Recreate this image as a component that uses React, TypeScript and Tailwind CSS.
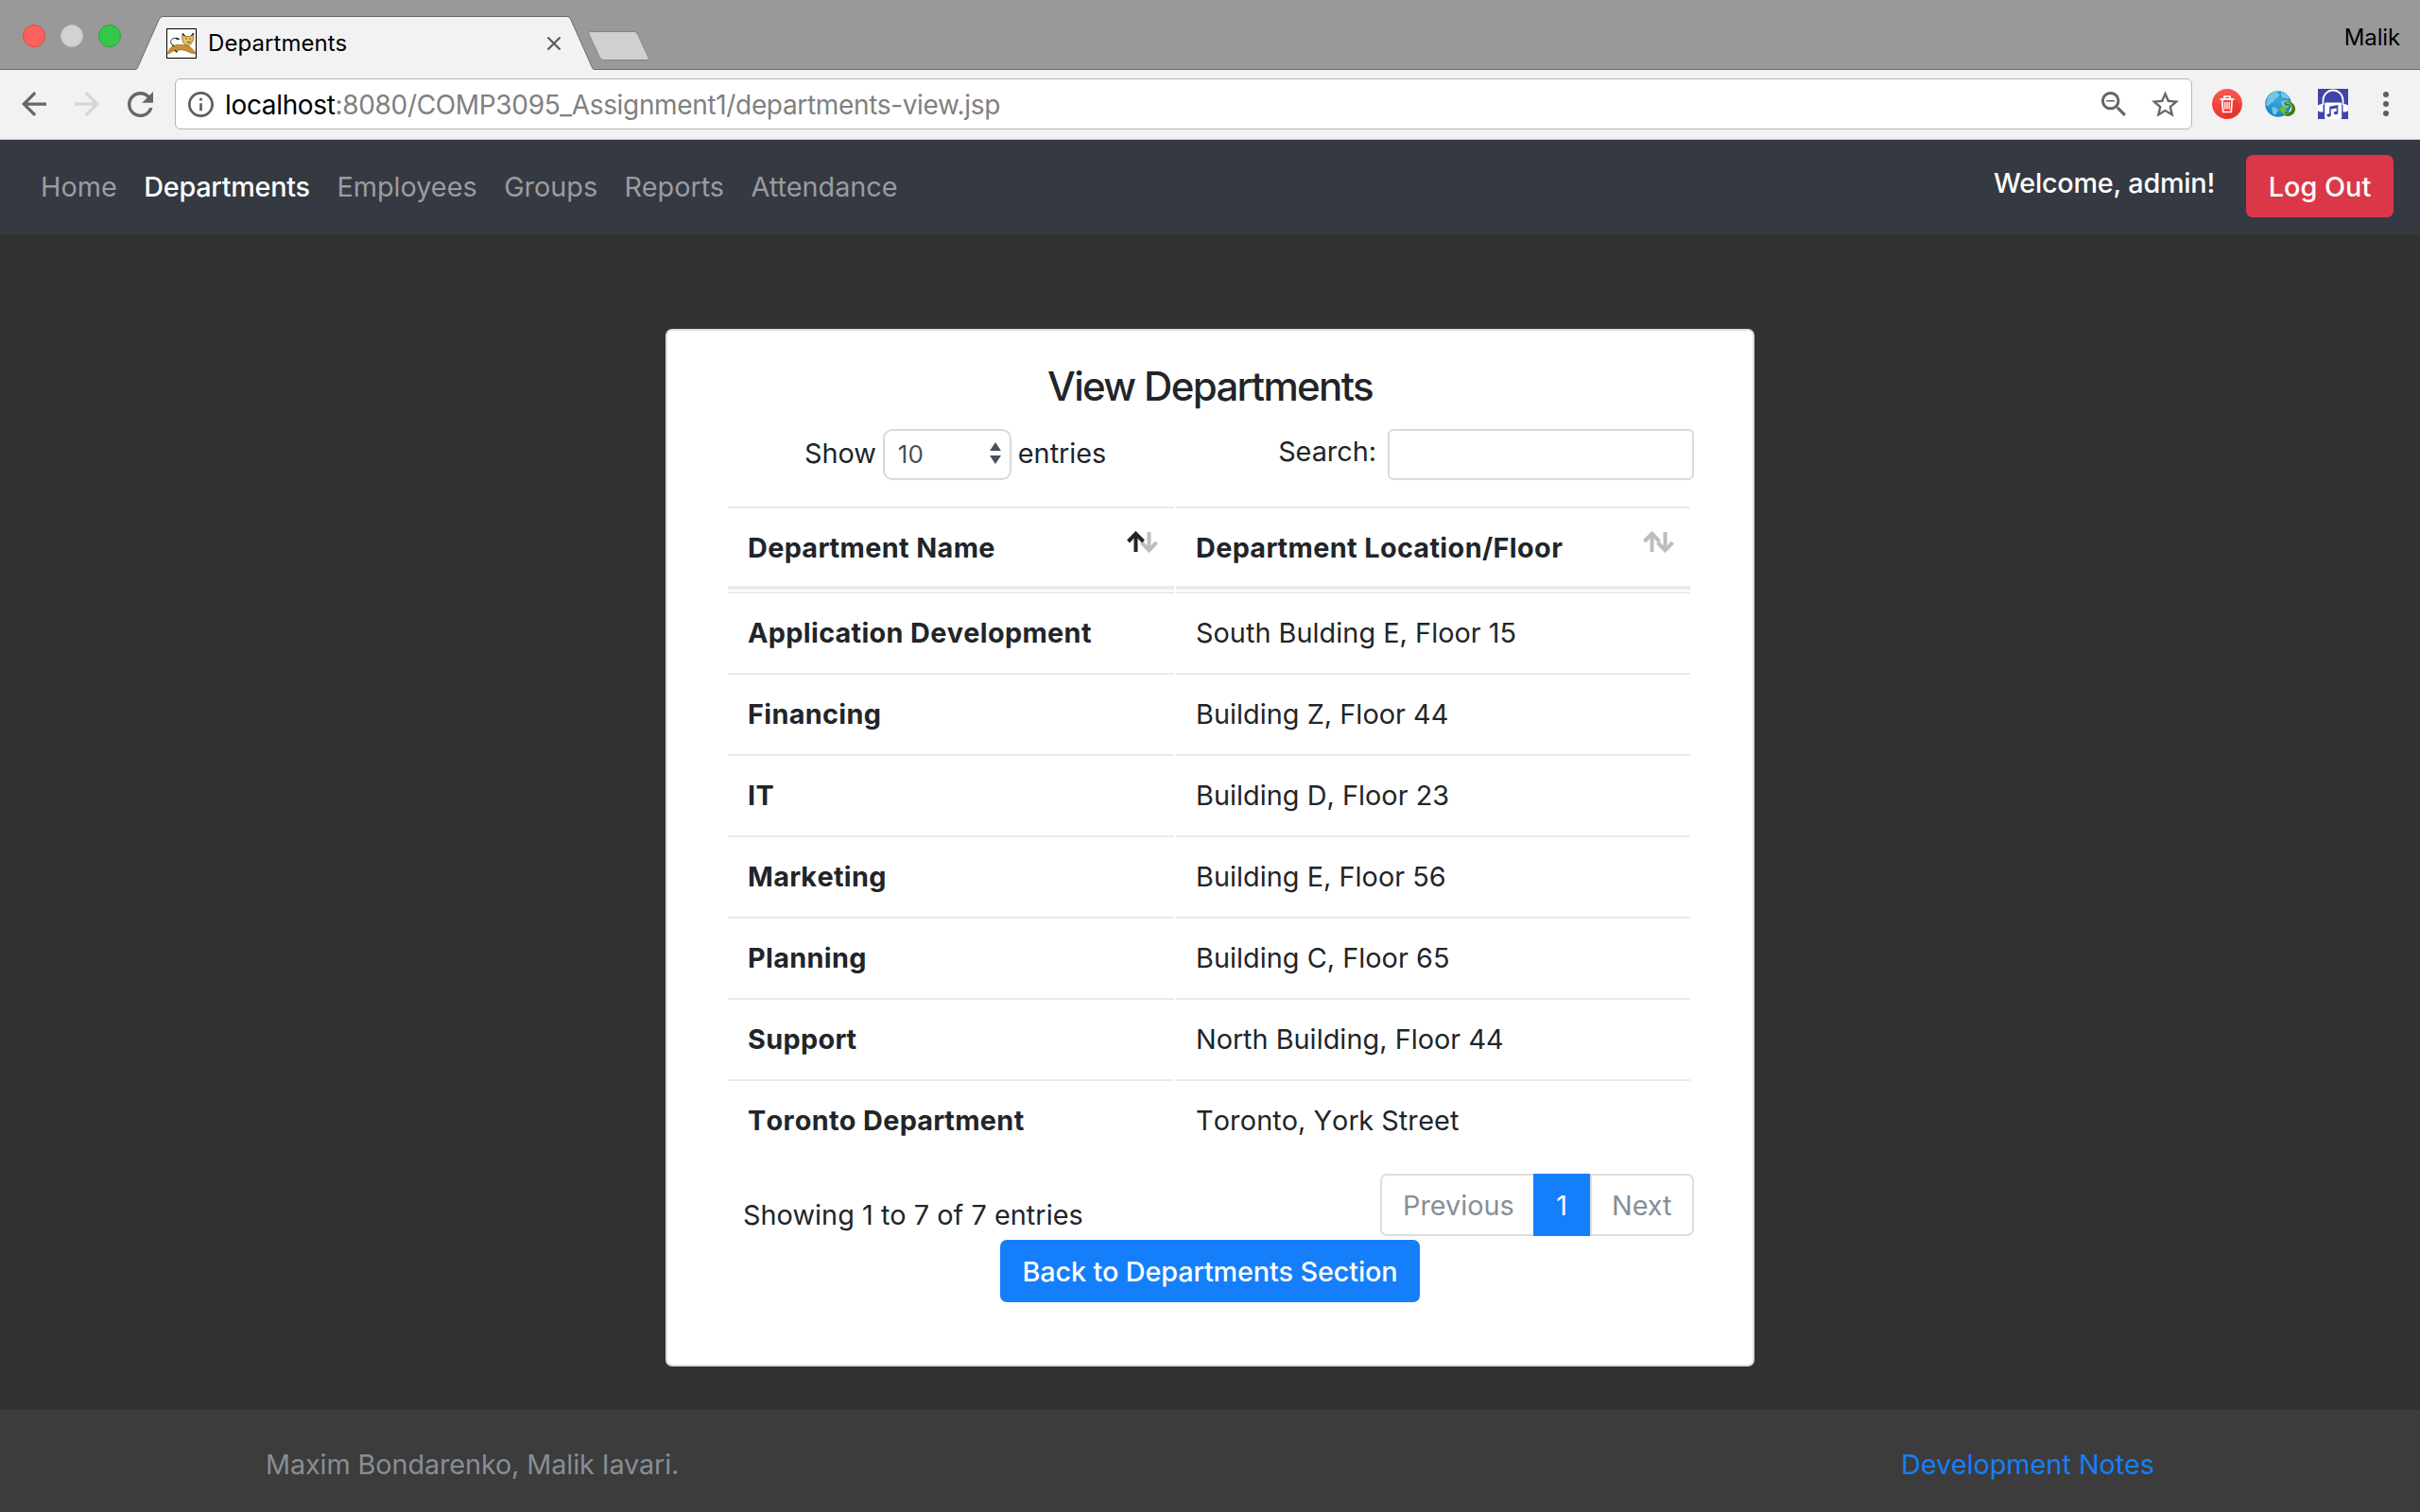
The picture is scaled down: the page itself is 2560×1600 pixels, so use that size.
import type { ReactNode } from "react";

const navItems = ["Home", "Departments", "Employees", "Groups", "Reports", "Attendance"];

const departments = [
  ["Application Development", "South Bulding E, Floor 15"],
  ["Financing", "Building Z, Floor 44"],
  ["IT", "Building D, Floor 23"],
  ["Marketing", "Building E, Floor 56"],
  ["Planning", "Building C, Floor 65"],
  ["Support", "North Building, Floor 44"],
  ["Toronto Department", "Toronto, York Street"],
];

function Icon({ d, box, className }: { d: string; box: string; className: string }) {
  return (
    <svg viewBox={box} className={`block shrink-0 fill-current ${className}`}>
      <path d={d} />
    </svg>
  );
}

const ARROW = "M20 11H7.83l5.59-5.59L12 4l-8 8 8 8 1.41-1.41L7.83 13H20v-2z";
const RELOAD =
  "M17.65 6.35C16.2 4.9 14.21 4 12 4c-4.42 0-7.99 3.58-7.99 8s3.57 8 7.99 8c3.73 0 6.84-2.55 7.73-6h-2.08c-.82 2.33-3.04 4-5.65 4-3.31 0-6-2.69-6-6s2.69-6 6-6c1.66 0 3.14.69 4.22 1.78L13 11h7V4l-2.35 2.35z";
const INFO =
  "M11 7h2v2h-2zm0 4h2v6h-2zm1-9C6.48 2 2 6.48 2 12s4.48 10 10 10 10-4.48 10-10S17.52 2 12 2zm0 18c-4.41 0-8-3.59-8-8s3.59-8 8-8 8 3.59 8 8-3.59 8-8 8z";
const ZOOM_OUT =
  "M15.5 14h-.79l-.28-.27C15.41 12.59 16 11.11 16 9.5 16 5.91 13.09 3 9.5 3S3 5.91 3 9.5 5.91 16 9.5 16c1.61 0 3.09-.59 4.23-1.57l.27.28v.79l5 4.99L20.49 19l-4.99-5zm-6 0C7.01 14 5 11.99 5 9.5S7.01 5 9.5 5 14 7.01 14 9.5 11.99 14 9.5 14zM6.5 9h6v1h-6z";
const STAR =
  "M22 9.24l-7.19-.62L12 2 9.19 8.63 2 9.24l5.46 4.73L5.82 21 12 17.27 18.18 21l-1.63-7.03L22 9.24zM12 15.4l-3.76 2.27 1-4.28-3.32-2.88 4.38-.38L12 6.1l1.71 4.04 4.38.38-3.32 2.88 1 4.28L12 15.4z";

function TomcatIcon() {
  return (
    <svg viewBox="0 0 32 32" className="block size-8 shrink-0">
      <rect x="0.5" y="0.5" width="31" height="31" fill="#fff" stroke="#000" />
      <path d="M1.500 26.500C3 21 6 18.500 11 17.500c4-.5 6 .5 9 0l5 2 6 6-1 1.500-4-1-6-2.500-4-.8-6 .8-4 1-2.500 2z" fill="#c8912b" stroke="#7a5a1c" strokeWidth="0.6" />
      <path d="M17 6l3 2.500h5L29 5.500l-.5 7-3 4.500-3.500 1.500-4-3-1.500-5z" fill="#ecc15a" stroke="#6b5426" strokeWidth="0.7" />
      <path d="M17 5.500l2.500 2.500M28.500 5l-2 3" stroke="#111" strokeWidth="1.300" />
      <path d="M20.500 10.500l1.500.8M26 10.500l-1.500.8M22 14l1.500 1 2-1" stroke="#3a2d10" strokeWidth="0.9" fill="none" />
      <path d="M7 18C3.500 16 4 11 8 10.500c3-.2 4 .8 6 1" stroke="#222" strokeWidth="0.9" fill="none" />
      <path d="M10 9.500l4 1.500-3 1.500zM5 16l4 2.500-2 .5zM8.500 22l4 3-2.500.5z" fill="#222" />
    </svg>
  );
}

function TrashExtension() {
  return (
    <svg viewBox="0 0 32 32" className="block size-8 shrink-0">
      <defs>
        <linearGradient id="trashRed" x1="0" y1="0" x2="0" y2="1">
          <stop offset="0" stopColor="#f65a52" />
          <stop offset="1" stopColor="#ee332b" />
        </linearGradient>
      </defs>
      <circle cx="16" cy="16" r="16" fill="url(#trashRed)" />
      <path d="M23.500 10.500l7 7A16 16 0 0 1 20 31.300L12 25z" fill="#d92a24" opacity="0.35" />
      <path d="M8.500 11h15" stroke="#fff" strokeWidth="2" />
      <path d="M13 10.500V8h6v2.500M10.800 12l.9 12.500h8.600l.9-12.500" stroke="#fff" strokeWidth="1.700" fill="none" />
      <path d="M13.800 14v7.500M16 14v7.500M18.200 14v7.500" stroke="#fff" strokeWidth="1.300" />
    </svg>
  );
}

function GlobeExtension() {
  return (
    <svg viewBox="0 0 32 32" className="block size-8 shrink-0">
      <defs>
        <radialGradient id="globeBlue" cx="0.5" cy="0.35" r="0.65">
          <stop offset="0" stopColor="#3fa9de" />
          <stop offset="1" stopColor="#1585c2" />
        </radialGradient>
      </defs>
      <circle cx="14" cy="16" r="13.800" fill="url(#globeBlue)" />
      <path d="M3 8.500l5-4.500 6-1.500-1 2.500 3 1-4 4-2 1-1 3-3 1.500-3 3-2-1.500zM17 3l6 2.500 3 4-3 1.500-2-2-2 1-2-3zM17 13l6-1 4 2-2 5-4 2-3-3zM7 19l5 1 2 3-3 5-3-2z" fill="#8fd3f0" opacity="0.75" />
      <path d="M21 16.500c5-3 10 1 9 6-1 4-6 6-9.500 3" stroke="#3e7a14" strokeWidth="3.800" fill="none" />
      <path d="M22 15.200c4-1.200 7 2 6.500 6" stroke="#7db63a" strokeWidth="1.600" fill="none" />
      <path d="M14.500 22l5-5 3.500 6.500-2.500 1.500c1 1.500 3 1.500 5 .5-3 3-6.500 2-8-1.500z" fill="#7cbc2c" />
    </svg>
  );
}

function MusicExtension() {
  return (
    <svg viewBox="0 0 32 32" className="block size-8 shrink-0">
      <rect width="32" height="32" fill="#3f44a8" />
      <path d="M5.500 17V12A10.500 10.500 0 0 1 26.500 12v5" stroke="#fff" strokeWidth="1.800" fill="none" />
      <path d="M0 17.500q1.500-1.500 4.500-1.500h1v8.500H4q-3 0-4-1.500zM32 17.500Q30.500 16 27.500 16h-1v8.500H28q3 0 4-1.500z" fill="#fff" />
      <rect x="7.200" y="14.500" width="18" height="17.500" rx="1.500" fill="#fff" />
      <path d="M13 28v-8.500l7.500-1.500v7.500M13 21l7.500-1.500" stroke="#3f44a8" strokeWidth="1.600" fill="none" />
      <ellipse cx="11.600" cy="28" rx="2.200" ry="1.800" fill="#3f44a8" />
      <ellipse cx="19" cy="25.600" rx="2.200" ry="1.800" fill="#3f44a8" />
    </svg>
  );
}

function SortIcon({ ascending }: { ascending?: boolean }) {
  return (
    <svg viewBox="0 0 34 24" className="mt-6 mr-4 block h-6 w-[34px] shrink-0" fill="none" strokeWidth="4">
      <g stroke="#bcbdbf">
        <path d="M23.500 1v19" />
        <path d="M15.500 12l8 8.300 8-8.300" />
      </g>
      <g stroke={ascending ? "#212529" : "#bcbdbf"}>
        <path d="M9.500 22V3" />
        <path d="M1.500 11l8-8.300 8 8.300" />
      </g>
    </svg>
  );
}

function TabStrip() {
  return (
    <div className="flex h-[74px] items-start border-b border-[#6b6b6b] bg-[#999999]">
      <div className="flex w-36 shrink-0 gap-4 pt-[26px] pl-6">
        <span className="size-6 rounded-full border border-[#e2463f] bg-[#fc615d]" />
        <span className="size-6 rounded-full border border-[#c4c4c4] bg-[#d2d2d2]" />
        <span className="size-6 rounded-full border border-[#24a938] bg-[#34c84a]" />
      </div>
      <div className="relative -mb-px flex h-[74px] w-[484px] shrink-0 items-start pl-8">
        <svg viewBox="0 0 484 74" className="absolute inset-0 h-[74px] w-[484px]">
          <path d="M0 73.500Q1 73 2 70.500L24 21Q25.500 17.500 28 17.500H456Q458.500 17.500 460 21L482 70.500Q483 73 484 73.500V74H0z" fill="#f2f2f2" />
          <path d="M0 73.500Q1 73 2 70.500L24 21Q25.500 17.500 28 17.500H456Q458.500 17.500 460 21L482 70.500Q483 73 484 73.500" fill="none" stroke="#6b6b6b" />
        </svg>
        <div className="relative mt-[30px]">
          <TomcatIcon />
        </div>
        <span className="relative mt-[30px] ml-3 grow text-[24px] leading-8 tracking-[0.07px] text-black">Departments</span>
        <svg viewBox="0 0 16 16" className="relative mt-[38px] mr-[34px] size-4">
          <path d="M1.500 1.500l13 13M14.500 1.500l-13 13" stroke="#5a5a5a" strokeWidth="2.200" />
        </svg>
      </div>
      <svg viewBox="0 0 66 32" className="mt-[33px] -ml-1.5 block h-8 w-[66px] shrink-0">
        <path d="M2.500 .5H49Q51.500 .5 52.500 3L64 28Q65 30.500 63 30.500H17Q14 30.500 12.500 28L1 3Q0 .5 2.500 .5z" fill="#d0d0d0" stroke="#858585" />
      </svg>
      <span className="mt-6 mr-[21px] ml-auto text-[24px] leading-8 tracking-[-0.15px] text-black">Malik</span>
    </div>
  );
}

function Toolbar() {
  return (
    <div className="flex h-[74px] items-start border-b border-[#cbcbcb] bg-[#f2f2f2] pt-[9px]">
      <div className="flex w-[185px] shrink-0 items-start pt-[14px] pl-[23px]">
        <Icon d={ARROW} box="4 4 16 16" className="size-[26px] text-[#666666]" />
        <Icon d={ARROW} box="4 4 16 16" className="ml-[30px] size-[26px] rotate-180 text-[#d6d6d6]" />
        <Icon d={RELOAD} box="4 4 16 16" className="ml-[30px] size-[27px] text-[#666666]" />
      </div>
      <div className="flex h-[54px] w-[2134px] shrink-0 items-start rounded-md border border-[#b5b5b5] bg-white pl-[13px]">
        <Icon d={INFO} box="2 2 20 20" className="mt-[13px] size-[27px] text-[#5f5f5f]" />
        <span className="mt-1.5 ml-3 text-[28px] leading-[43px] tracking-[-0.34px] text-[#808080]">
          <span className="text-black">localhost</span>:8080/COMP3095_Assignment1/departments-view.jsp
        </span>
        <Icon d={ZOOM_OUT} box="3 3 17.500 17.500" className="mt-[13px] ml-auto size-[26px] text-[#666666]" />
        <Icon d={STAR} box="2 2 20 19" className="mt-3 mr-[13px] ml-[27px] h-7 w-[29px] text-[#666666]" />
      </div>
      <div className="mt-[11px] ml-[21px] flex gap-6">
        <TrashExtension />
        <GlobeExtension />
        <MusicExtension />
      </div>
      <div className="mt-[14px] ml-[37px] flex flex-col gap-1">
        <span className="size-1.5 rounded-full bg-[#5f5f5f]" />
        <span className="size-1.5 rounded-full bg-[#5f5f5f]" />
        <span className="size-1.5 rounded-full bg-[#5f5f5f]" />
      </div>
    </div>
  );
}

function NavBar() {
  return (
    <nav className="flex h-[100px] items-start bg-[#353941] pr-7 pl-[43px]">
      <ul className="flex gap-[28.5px] pt-7">
        {navItems.map((item) => (
          <li
            key={item}
            className={item === "Departments" ? "font-medium tracking-[-0.25px] text-white" : "text-[#9a9ca0]"}
          >
            {item}
          </li>
        ))}
      </ul>
      <span className="mt-6 ml-auto font-medium tracking-[-0.22px] text-white">Welcome, admin!</span>
      <button className="mt-4 ml-[33px] block h-[66px] w-[156px] rounded-[7px] bg-[#da3849] pt-3 pb-[11px] text-center font-medium text-white">
        Log Out
      </button>
    </nav>
  );
}

function HeaderCell({ children, ascending }: { children: ReactNode; ascending?: boolean }) {
  return (
    <div className="flex h-[88px] items-start justify-between border-t-2 border-b-4 border-[#e7ebee] pl-[21px] font-bold tracking-[0.4px]">
      <span className="pt-5">{children}</span>
      <SortIcon ascending={ascending} />
    </div>
  );
}

function DepartmentTable() {
  return (
    <div className="mt-7 ml-16 grid w-[1018px] grid-cols-[472px_544px] gap-0.5 [font-kerning:none]">
      <HeaderCell ascending>Department Name</HeaderCell>
      <HeaderCell>Department Location/Floor</HeaderCell>
      {departments.map(([name, location]) => (
        <div key={name} className="contents">
          <div className="h-[84px] border-t-2 border-[#e7ebee] pt-5 pl-[21px] font-bold tracking-[0.35px]">{name}</div>
          <div className="h-[84px] border-t-2 border-[#e7ebee] pt-5 pl-[21px] tracking-[0.05px]">{location}</div>
        </div>
      ))}
    </div>
  );
}

function Card() {
  return (
    <main className="mx-auto mt-[100px] h-[1098px] w-[1152px] rounded-[7px] border-2 border-[#dedede] bg-white pt-[33px]">
      <h4 className="text-center text-[42px] leading-[52px] font-medium tracking-[-1.67px]">View Departments</h4>
      <div className="mt-[19px] flex h-[54px] items-start justify-between pr-[62px] pl-[145px]">
        <div className="flex items-start gap-[7px]">
          <span className="pt-1">Show</span>
          <div className="flex h-[54px] w-[136px] items-start justify-between rounded-[10px] border-2 border-[#d9d9d9] pr-[9px] pl-[14px]">
            <span className="pt-[5px] text-[26px] leading-[40px] text-[#495057]">10</span>
            <svg viewBox="0 0 12 23" className="mt-3 block h-[23px] w-3 fill-[#495057]">
              <path d="M6 0l6 9H0zM6 23l-6-9h12z" />
            </svg>
          </div>
          <span className="pt-1">entries</span>
        </div>
        <div className="flex items-start gap-3">
          <span className="pt-0.5">Search:</span>
          <div className="h-[54px] w-[324px] rounded-md border-2 border-[#d9d9d9] bg-white" />
        </div>
      </div>
      <DepartmentTable />
      <div className="mt-4 flex h-[66px] items-start justify-between pr-[62px] pl-20">
        <span className="pt-[22px] tracking-[0.06px]">Showing 1 to 7 of 7 entries</span>
        <div className="flex h-[66px] text-[#868e96]">
          <span className="w-[162px] rounded-l-[7px] border-2 border-r-0 border-[#dddddd] pt-[10px] pl-[22px]">Previous</span>
          <span className="w-[60px] bg-[#157ffb] pt-3 text-center text-white">1</span>
          <span className="w-[110px] rounded-r-[7px] border-2 border-[#dddddd] pt-[10px] pl-[21px]">Next</span>
        </div>
      </div>
      <button className="mx-auto mt-1 block h-[66px] w-[444px] rounded-[7px] bg-[#157ffb] pt-3 pb-[11px] text-center font-medium tracking-[-0.12px] whitespace-nowrap text-white">
        Back to Departments Section
      </button>
    </main>
  );
}

export default function App() {
  return (
    <div className="flex h-[1600px] w-[2560px] flex-col overflow-hidden bg-[#323232] font-['Inter',sans-serif] text-[28.8px] leading-[43px] text-[#212529]">
      <TabStrip />
      <Toolbar />
      <NavBar />
      <Card />
      <footer className="mt-auto flex h-[108px] justify-between bg-[#3c3c3c] px-[281px] pt-9">
        <span className="tracking-[-0.1px] text-[#868e96]">Maxim Bondarenko, Malik Iavari.</span>
        <a className="text-[#157ffb]">Development Notes</a>
      </footer>
    </div>
  );
}
